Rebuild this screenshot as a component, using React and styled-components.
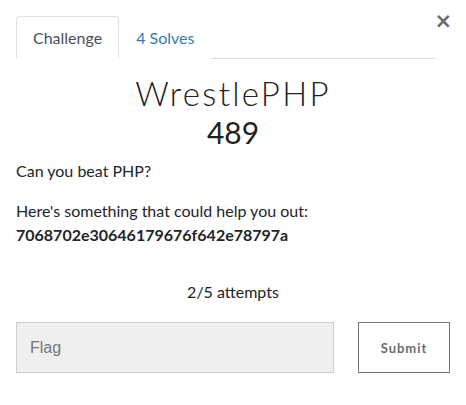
import React from 'react'
import styled, { createGlobalStyle } from 'styled-components'

const GlobalStyle = createGlobalStyle`
    body {
        margin: 0;
        background: #fff;
        font-family: Lato, "Open Sans", sans-serif;
        color: #212529;
    }
`

const Modal = styled.div`
    width: 466px;
    height: 405px;
    padding: 16px 16px 0 16px;
    box-sizing: border-box;
    position: relative;
`

const Close = styled.button`
    position: absolute;
    top: 11px;
    right: 14px;
    border: none;
    background: none;
    padding: 0;
    font-family: "DejaVu Sans", sans-serif;
    font-size: 21px;
    font-weight: bold;
    color: #6b6b6b;
    line-height: 1;
    cursor: pointer;
`

const Tabs = styled.ul`
    display: flex;
    list-style: none;
    margin: 0;
    padding: 0;
    width: 420px;
    border-bottom: 1px solid #dee2e6;
`

const Tab = styled.li`
    margin-bottom: -1px;
    padding: 0 16px;
    height: 41px;
    display: flex;
    align-items: center;
    font-size: 16px;
    border: 1px solid ${p => (p.active ? '#dee2e6' : 'transparent')};
    border-bottom-color: ${p => (p.active ? '#fff' : 'transparent')};
    border-radius: 4px 4px 0 0;
    background: #fff;
    color: ${p => (p.active ? '#495057' : '#337ab7')};
`

const Title = styled.h2`
    margin: 14px 0 0 0;
    text-align: center;
    font-family: Lato, sans-serif;
    font-weight: 300;
    font-size: 33px;
    letter-spacing: 2.3px;
    line-height: 40px;
    color: #222;
`

const Value = styled.h3`
    margin: 0;
    text-align: center;
    font-weight: 400;
    font-size: 30px;
    line-height: 38px;
    color: #222;
`

const Description = styled.div`
    margin-top: 8px;
    font-size: 16px;
    line-height: 24px;
    p {
        margin: 0 0 16px 0;
    }
    strong {
        font-weight: 700;
    }
`

const Attempts = styled.p`
    margin: 35px 0 0 0;
    text-align: center;
    font-size: 16px;
    color: #222;
`

const SubmitRow = styled.form`
    display: flex;
    justify-content: space-between;
    margin-top: 21px;
    width: 434px;
`

const FlagInput = styled.input`
    width: 318px;
    height: 51px;
    box-sizing: border-box;
    background: #efefef;
    border: 1px solid #cfcfcf;
    padding: 0 13px;
    font-family: "Liberation Sans", Arial, sans-serif;
    font-size: 16px;
    outline: none;
    &::placeholder {
        color: #777;
    }
`

const SubmitButton = styled.button`
    width: 92px;
    height: 51px;
    background: #fff;
    border: 1px solid #777;
    font-family: Lato, sans-serif;
    font-weight: 700;
    font-size: 13px;
    letter-spacing: 1px;
    color: #6c6c6c;
    cursor: pointer;
`

export default function App() {
    return (
        <>
            <GlobalStyle />
            <Modal>
                <Close>×</Close>
                <Tabs>
                    <Tab active>Challenge</Tab>
                    <Tab>4 Solves</Tab>
                </Tabs>
                <Title>WrestlePHP</Title>
                <Value>489</Value>
                <Description>
                    <p>Can you beat PHP?</p>
                    <p>
                        Here's something that could help you out:
                        <br />
                        <strong>7068702e30646179676f642e78797a</strong>
                    </p>
                </Description>
                <Attempts>2/5 attempts</Attempts>
                <SubmitRow onSubmit={e => e.preventDefault()}>
                    <FlagInput placeholder="Flag" />
                    <SubmitButton type="submit">Submit</SubmitButton>
                </SubmitRow>
            </Modal>
        </>
    )
}
